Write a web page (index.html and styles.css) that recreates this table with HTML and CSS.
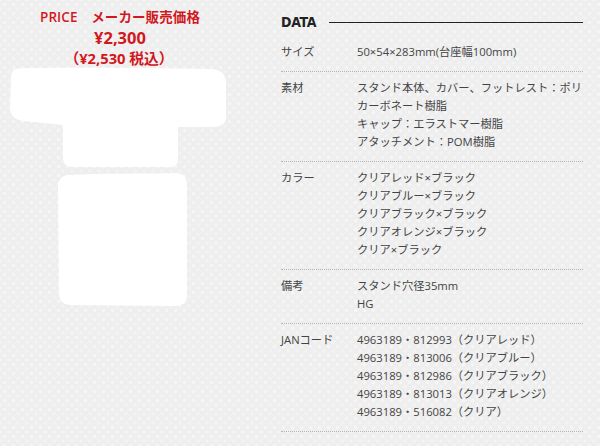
FILE: index.html
```html
<!DOCTYPE html>
<html lang="ja">
<head>
<meta charset="utf-8">
<title>DATA</title>
<link rel="stylesheet" href="styles.css">
</head>
<body>
<div class="page">
  <section class="price">
    <p class="price-title">PRICE　メーカー販売価格</p>
    <p class="price-main">¥2,300</p>
    <p class="price-tax">（¥2,530 税込）</p>
    <svg class="photo" width="240" height="245" viewBox="0 0 240 245" aria-hidden="true">
      <path fill="#fff" d="M16 2 C40 0 120 1 210 2 C222 2 227 8 226 20 L226 50 C226 58 220 60 210 60 L178 60 L178 92 C178 100 172 101 165 100 L75 100 C66 100 63 97 63 90 L63 58 L24 54 C14 53 10 48 10 40 L11 14 C11 7 12 3 16 2 Z"/>
      <path fill="#fff" d="M70 108 C100 106 150 107 175 106 C183 106 187 110 187 118 L187 228 C187 236 182 239 174 239 L72 238 C63 238 59 234 59 226 L58 120 C58 112 62 108 70 108 Z"/>
    </svg>
  </section>
  <section class="data">
    <h2 class="data-head"><span class="data-title">DATA</span><span class="data-rule"></span></h2>
    <dl class="spec">
      <div class="spec-row">
        <dt>サイズ</dt>
        <dd>50×54×283mm(台座幅100mm)</dd>
      </div>
      <div class="spec-row">
        <dt>素材</dt>
        <dd>スタンド本体、カバー、フットレスト：ポリ<br>カーボネート樹脂<br>キャップ：エラストマー樹脂<br>アタッチメント：POM樹脂</dd>
      </div>
      <div class="spec-row">
        <dt>カラー</dt>
        <dd>クリアレッド×ブラック<br>クリアブルー×ブラック<br>クリアブラック×ブラック<br>クリアオレンジ×ブラック<br>クリア×ブラック</dd>
      </div>
      <div class="spec-row">
        <dt>備考</dt>
        <dd>スタンド穴径35mm<br>HG</dd>
      </div>
      <div class="spec-row">
        <dt>JANコード</dt>
        <dd>4963189・812993（クリアレッド）<br>4963189・813006（クリアブルー）<br>4963189・812986（クリアブラック）<br>4963189・813013（クリアオレンジ）<br>4963189・516082（クリア）</dd>
      </div>
    </dl>
  </section>
</div>
</body>
</html>
```

FILE: styles.css
```css
html, body {
  margin: 0;
  padding: 0;
}
body {
  width: 600px;
  height: 446px;
  overflow: hidden;
  background-color: #eeeeee;
  background-image:
    radial-gradient(circle at 50% 50%, #f5f5f5 0 28%, transparent 34%),
    radial-gradient(circle at 50% 50%, #f3f3f3 0 28%, transparent 34%);
  background-size: 9px 9px, 9px 9px;
  background-position: 0 0, 4.5px 4.5px;
  font-family: "Open Sans", "Noto Sans CJK JP", sans-serif;
  color: #444;
}
.page {
  display: flex;
  align-items: flex-start;
}
.price {
  width: 240px;
  flex: none;
  display: flex;
  flex-direction: column;
  align-items: center;
  padding-top: 7px;
  color: #d2181e;
}
.price p {
  margin: 0;
}
.price-title {
  font-size: 13.5px;
  line-height: 20px;
  font-weight: 600;
  letter-spacing: 0.1px;
}
.price-main {
  font-size: 16.5px;
  line-height: 22px;
  font-weight: 700;
}
.price-tax {
  font-size: 14.75px;
  line-height: 18px;
  font-weight: 700;
  margin-left: -2px !important;
}
.photo {
  display: block;
  align-self: flex-start;
}
.data {
  margin-left: 41px;
  width: 302px;
  padding-top: 12px;
}
.data-head {
  display: flex;
  align-items: center;
  height: 20px;
  margin: 0 0 4px;
  gap: 13px;
}
.data-title {
  font-family: "DejaVu Sans Condensed", "DejaVu Sans", sans-serif;
  font-stretch: condensed;
  font-weight: 700;
  font-size: 14px;
  color: #222;
  letter-spacing: -0.3px;
}
.data-rule {
  flex: 1;
  height: 0;
  border-top: 1.5px solid #222;
  margin-top: 1px;
}
.spec {
  margin: 0;
}
.spec-row {
  display: grid;
  grid-template-columns: 76px 1fr;
  padding: 7px 0 10px;
  border-bottom: 1px dotted #b5b5b5;
  font-size: 11.25px;
  line-height: 18px;
}
.spec-row dt,
.spec-row dd {
  margin: 0;
  white-space: nowrap;
}
```
